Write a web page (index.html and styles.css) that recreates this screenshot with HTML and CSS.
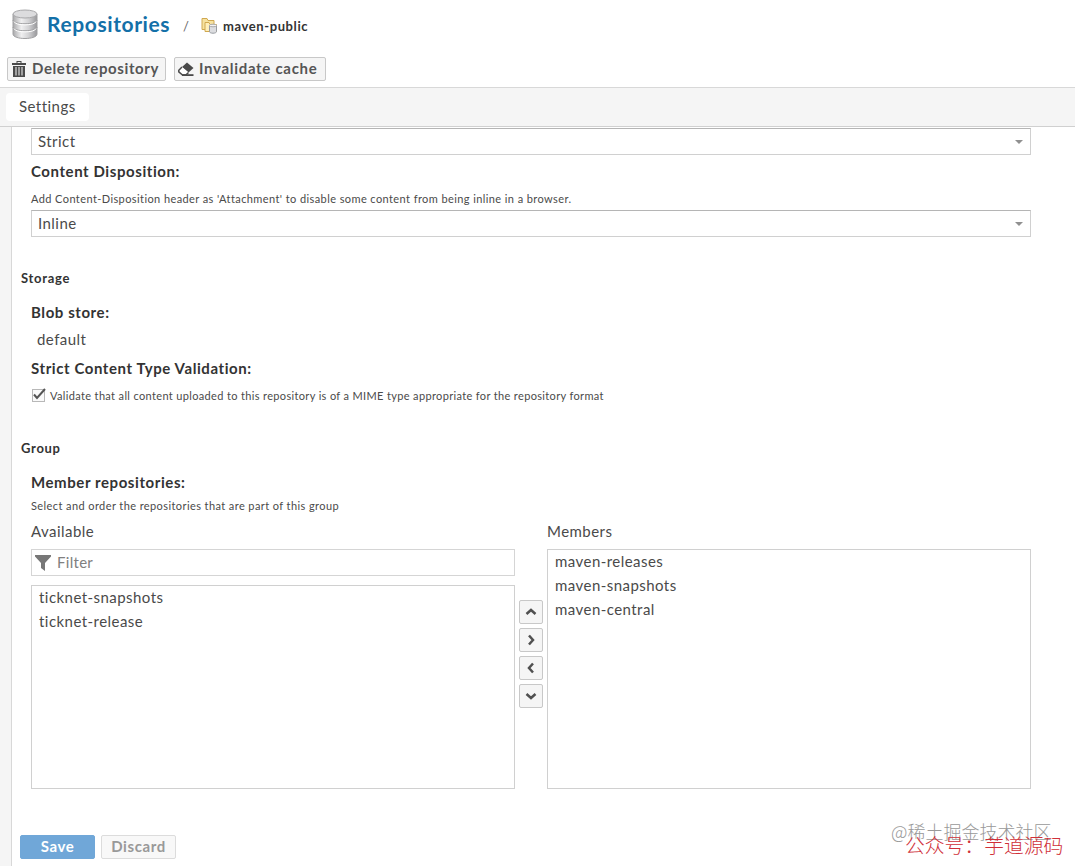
FILE: index.html
```html
<!DOCTYPE html>
<html lang="en">
<head>
    <meta charset="UTF-8">
    <meta name="viewport" content="width=device-width, initial-scale=1.0">
    <title>Repositories - maven-public</title>
    <link rel="stylesheet" href="styles.css">
</head>
<body>
    <header class="header">
        <svg class="db-icon" width="28" height="32" viewBox="0 0 28 32">
            <defs>
                <linearGradient id="metal">
                    <stop offset="0" stop-color="#a9a9ab"/>
                    <stop offset="0.35" stop-color="#efeff0"/>
                    <stop offset="0.65" stop-color="#d2d2d4"/>
                    <stop offset="1" stop-color="#98989b"/>
                </linearGradient>
            </defs>
            <path d="M2 5v20c0 6 24 6 24 0V5z" fill="url(#metal)" stroke="#a0a0a2"/>
            <ellipse cx="14" cy="5" rx="12" ry="4" fill="#dcdcde" stroke="#a8a8aa"/>
            <path d="M2 11c0 5 24 5 24 0M2 18c0 5 24 5 24 0" fill="none" stroke="#a0a0a2"/>
            <path d="M3 12.500c1 4.500 21 4.500 22 0M3 19.500c1 4.500 21 4.500 22 0" fill="none" stroke="#fff"/>
        </svg>
        <h1>Repositories</h1>
        <span class="slash">/</span>
        <svg class="folder-icon" width="17" height="17" viewBox="0 0 17 17">
            <path d="M1 12.500V1.500h5l1 2h6v9z" fill="#f6e2a0" stroke="#d0a850"/>
            <path d="M4 14.500V5.500h4l1 2h6.500v7z" fill="#ffefba" stroke="#d0a850"/>
            <path d="M8.500 8.500v6c0 2.300 7 2.300 7 0v-6z" fill="#dcdde0" stroke="#999ca1"/>
            <ellipse cx="12" cy="8.500" rx="3.500" ry="1.300" fill="#f3f3f4" stroke="#aaa"/>
        </svg>
        <span class="crumb">maven-public</span>
    </header>

    <div class="toolbar">
        <button class="btn btn-delete">
            <svg width="14" height="16" viewBox="0 0 14 16" fill="#4a4a4a">
                <path d="M4.500 0h5v2H14v2H0V2h4.500zM5.500 1v1h3V1z" fill-rule="evenodd"/>
                <path d="M1 5h12v11H1zM3.500 6v8.500h1V6zM6.500 6v8.500h1V6zM9.500 6v8.500h1V6z" fill-rule="evenodd"/>
            </svg>
            <span>Delete repository</span>
        </button>
        <button class="btn btn-cache">
            <svg width="16" height="14" viewBox="0 0 16 14">
                <path d="M9 0.500L15.500 6 10.500 10.500 4 5z" fill="#4a4a4a"/>
                <path d="M4 5L0.800 8.200v1.600L4.500 13h3.300l2.700-2.500" fill="#fff" stroke="#4a4a4a" stroke-width="1.500"/>
                <path d="M4 12.200h11.500V14H4z" fill="#4a4a4a"/>
            </svg>
            <span>Invalidate cache</span>
        </button>
    </div>

    <nav class="tabs">
        <span class="tab">Settings</span>
    </nav>

    <main class="panel">
        <div class="fields">
            <div class="select">Strict<i class="arrow"></i></div>
            <label class="label">Content Disposition:</label>
            <p class="help">Add Content-Disposition header as 'Attachment' to disable some content from being inline in a browser.</p>
            <div class="select">Inline<i class="arrow"></i></div>
        </div>

        <h2 class="section">Storage</h2>
        <div class="fields">
            <label class="label">Blob store:</label>
            <div class="value">default</div>
            <label class="label label-validation">Strict Content Type Validation:</label>
            <div class="check-row">
                <svg width="15" height="14" viewBox="0 0 15 14">
                    <rect x="1.500" y="1.500" width="12" height="12" fill="#fafafa" stroke="#b8b8b8"/>
                    <path d="M3 6.500L6 10 14 1" fill="none" stroke="#555" stroke-width="2"/>
                </svg>
                <span>Validate that all content uploaded to this repository is of a MIME type appropriate for the repository format</span>
            </div>
        </div>

        <h2 class="section section-group">Group</h2>
        <div class="fields">
            <label class="label">Member repositories:</label>
            <p class="help help-members">Select and order the repositories that are part of this group</p>
            <div class="selector">
                <div class="column">
                    <div class="column-title">Available</div>
                    <div class="filter">
                        <svg width="16" height="16" viewBox="0 0 16 16">
                            <path d="M0 0h16v1.500L10 8v8l-4-3V8L0 1.500z" fill="#777"/>
                        </svg>
                        <span>Filter</span>
                    </div>
                    <ul class="list">
                        <li>ticknet-snapshots</li>
                        <li>ticknet-release</li>
                    </ul>
                </div>
                <div class="move-buttons">
                    <button class="move"><svg width="12" height="12" viewBox="0 0 12 12"><path d="M1.500 8L6 4l4.500 4"/></svg></button>
                    <button class="move"><svg width="12" height="12" viewBox="0 0 12 12"><path d="M4 1.500L8 6l-4 4.500"/></svg></button>
                    <button class="move"><svg width="12" height="12" viewBox="0 0 12 12"><path d="M8 1.500L4 6l4 4.500"/></svg></button>
                    <button class="move"><svg width="12" height="12" viewBox="0 0 12 12"><path d="M1.500 4L6 8l4.500-4"/></svg></button>
                </div>
                <div class="column">
                    <div class="column-title">Members</div>
                    <ul class="list list-members">
                        <li>maven-releases</li>
                        <li>maven-snapshots</li>
                        <li>maven-central</li>
                    </ul>
                </div>
            </div>
        </div>

        <div class="actions">
            <button class="btn-save">Save</button>
            <button class="btn-discard">Discard</button>
        </div>
    </main>

    <div class="watermark watermark-gray">@稀土掘金技术社区</div>
    <div class="watermark watermark-red">公众号：芋道源码</div>
</body>
</html>
```
FILE: styles.css
```css
* {
    margin: 0;
    padding: 0;
    box-sizing: border-box;
}

body {
    height: 866px;
    overflow: hidden;
    position: relative;
    display: flex;
    flex-direction: column;
    background: #fff;
    color: #4a4a4a;
    font-family: Lato, "Noto Sans CJK SC", sans-serif;
    font-size: 15px;
    letter-spacing: 0.45px;
}

button {
    font-family: inherit;
    font-size: 15px;
    font-weight: bold;
    letter-spacing: 0.6px;
    border-radius: 2px;
    padding-bottom: 2px;
}

.header {
    display: flex;
    align-items: center;
    height: 49px;
    padding-left: 11px;
}

h1 {
    margin-left: 8px;
    width: 136px;
    font-size: 21px;
    line-height: 46px;
    padding-bottom: 2px;
    letter-spacing: 0.6px;
    color: #1470a8;
}

.slash {
    width: 18px;
    font-size: 13px;
    padding-top: 3px;
    color: #666;
}

.folder-icon {
    margin-top: 2px;
}

.crumb {
    margin-left: 5px;
    padding-top: 3px;
    font-size: 13px;
    font-weight: bold;
    letter-spacing: 0.6px;
    color: #333;
}

.toolbar {
    display: flex;
    gap: 8px;
    height: 38px;
    padding: 8px 7px 0;
}

.btn {
    display: flex;
    align-items: center;
    height: 24px;
    gap: 5px;
    padding: 0 0 0 4px;
    background: #f5f5f5;
    border: 1px solid #c8c8c8;
    color: #555;
    white-space: nowrap;
}

.btn span {
    padding-bottom: 2px;
}

.btn-delete {
    width: 159px;
    gap: 6px;
}

.btn-cache {
    width: 152px;
    padding-left: 3px;
    letter-spacing: 0.7px;
}

.tabs {
    height: 40px;
    padding: 5px 6px;
    background: #f5f5f5;
    border-top: 1px solid #d8d8d8;
    border-bottom: 1px solid #d0d0d0;
}

.tab {
    display: block;
    width: 83px;
    height: 28px;
    line-height: 26px;
    padding-left: 13px;
    background: #fff;
    border-radius: 4px;
}

.panel {
    flex: 1;
    padding-top: 1px;
    padding-left: 9px;
    border-left: 11px solid #f5f5f5;
    box-shadow: inset 1px 0 #d8d8d8;
}

.fields {
    width: 1011px;
    padding-left: 11px;
}

.select {
    display: flex;
    justify-content: space-between;
    height: 27px;
    line-height: 24px;
    padding: 0 7px 0 6px;
    border: 1px solid #d0d0d0;
    border-top-color: #b5b5b5;
}

.arrow {
    align-self: center;
    border: 4px solid transparent;
    border-top: 4px solid #909090;
    border-bottom: 0;
}

.label {
    display: block;
    height: 34px;
    line-height: 32px;
    font-weight: bold;
    letter-spacing: 0.58px;
    color: #333;
}

.help {
    height: 21px;
    line-height: 19px;
    font-size: 11px;
    letter-spacing: 0.41px;
}

.section {
    height: 20px;
    line-height: 20px;
    margin: 31px 0 8px 1px;
    font-size: 13px;
    letter-spacing: 0.7px;
    color: #333;
}

.section-group {
    margin-top: 32px;
}

.value {
    height: 20px;
    line-height: 18px;
    padding-left: 6px;
}

.label-validation {
    margin-top: 2px;
}

.check-row {
    display: flex;
    align-items: center;
    gap: 4px;
    height: 20px;
    padding-bottom: 2px;
    font-size: 11px;
    letter-spacing: 0.35px;
}

.help-members {
    height: 12px;
    line-height: 12px;
}

.selector {
    display: flex;
    margin-top: 10px;
}

.column {
    width: 484px;
}

.column-title {
    height: 27px;
    line-height: 18px;
}

.filter {
    display: flex;
    align-items: center;
    gap: 6px;
    height: 27px;
    margin-bottom: 9px;
    padding-left: 3px;
    border: 1px solid #d5d5d5;
    color: #808080;
    letter-spacing: 0.3px;
}

.filter span {
    padding-bottom: 2px;
}

.list {
    height: 204px;
    border: 1px solid #d0d0d0;
    list-style: none;
}

.list li {
    height: 24px;
    line-height: 22px;
    padding-left: 7px;
}

.list-members {
    height: 240px;
}

.move-buttons {
    display: flex;
    flex-direction: column;
    gap: 4px;
    width: 32px;
    padding: 78px 4px 0;
}

.move {
    display: flex;
    align-items: center;
    justify-content: center;
    width: 24px;
    height: 24px;
    padding: 0;
    background: #f5f5f5;
    border: 1px solid #c8c8c8;
}

.move path {
    fill: none;
    stroke: #505050;
    stroke-width: 2.5;
}

.actions {
    display: flex;
    gap: 6px;
    margin-top: 46px;
}

.btn-save,
.btn-discard {
    width: 75px;
    height: 24px;
    border: 1px solid #dcdcdc;
    background: #f8f8f8;
    color: #999;
}

.btn-save {
    background: #70a7d8;
    border-color: #70a7d8;
    color: #fff;
}

/* watermarks lie over the page */
.watermark {
    position: absolute;
    white-space: nowrap;
    font-family: "Noto Sans CJK SC", sans-serif;
    font-weight: 300;
    letter-spacing: 0;
}

.watermark-gray {
    left: 891px;
    top: 818px;
    font-size: 18px;
    line-height: 26px;
    color: #999;
}

.watermark-red {
    left: 905px;
    top: 832px;
    font-size: 19.8px;
    line-height: 26px;
    color: #d03038;
}
```
